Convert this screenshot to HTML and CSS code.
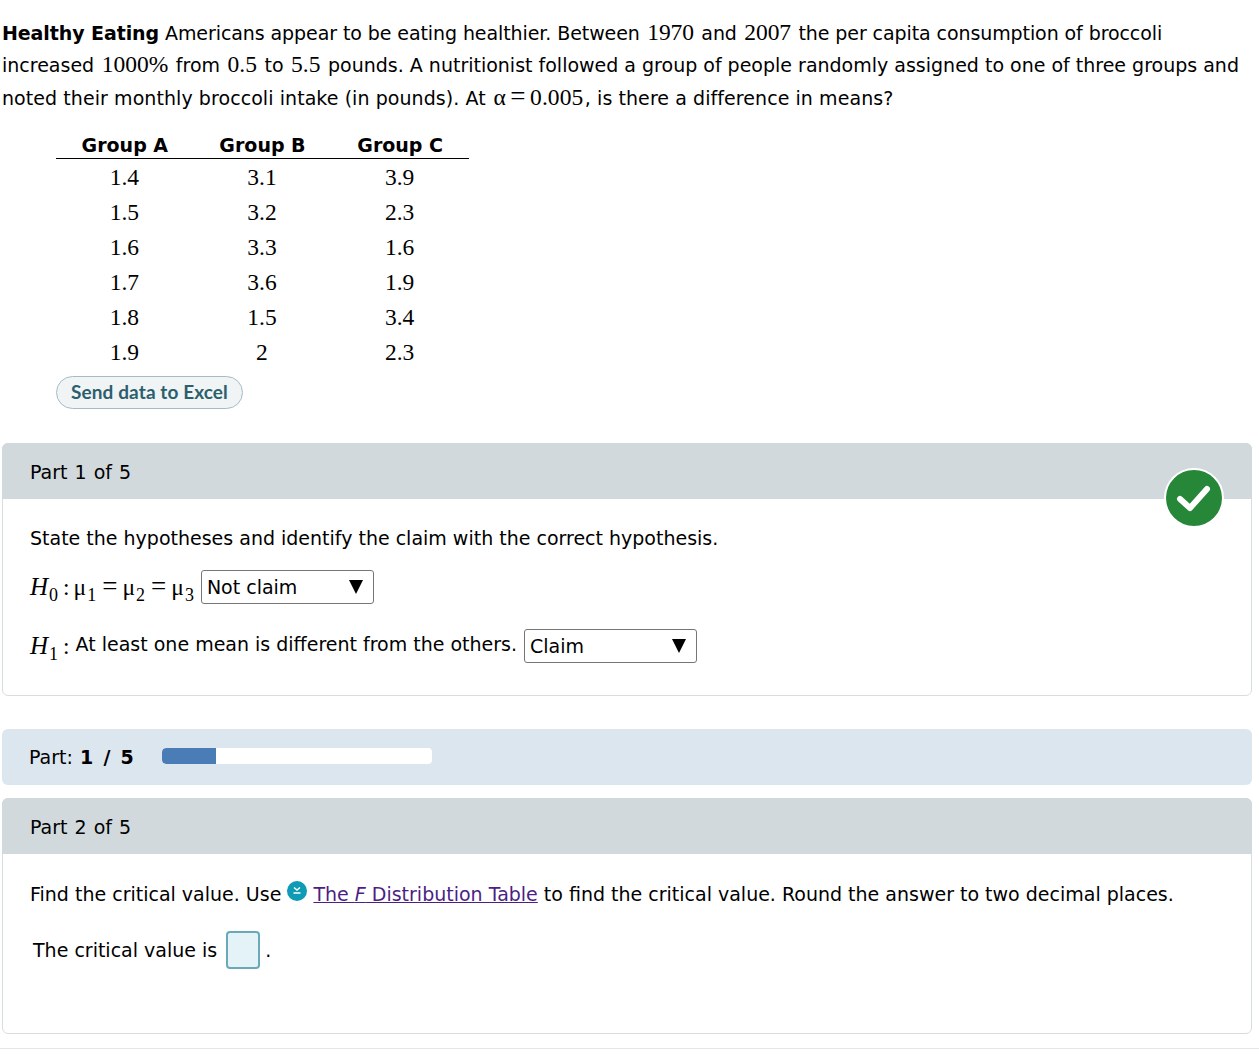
FILE: index.html
```html
<!DOCTYPE html>
<html lang="en">
<head>
    <meta charset="UTF-8">
    <title>Healthy Eating</title>
    <link rel="stylesheet" href="styles.css">
</head>
<body>
    <p class="intro">
        <span class="tight"><b>Healthy Eating</b> Americans appear to be eating healthier. Between <span class="num">1970</span> and <span class="num">2007</span> the per capita consumption of broccoli</span> increased <span class="num">1000%</span> from <span class="num">0.5</span> to <span class="num">5.5</span> pounds. A nutritionist followed a group of people randomly assigned to one of three groups and <span class="loose">noted their monthly broccoli intake (in pounds). At <span class="num">α<span class="eq">=</span>0.005</span>, is there a difference in means?</span>
    </p>

    <table class="data">
        <thead>
            <tr><th>Group A</th><th>Group B</th><th>Group C</th></tr>
        </thead>
        <tbody>
            <tr><td>1.4</td><td>3.1</td><td>3.9</td></tr>
            <tr><td>1.5</td><td>3.2</td><td>2.3</td></tr>
            <tr><td>1.6</td><td>3.3</td><td>1.6</td></tr>
            <tr><td>1.7</td><td>3.6</td><td>1.9</td></tr>
            <tr><td>1.8</td><td>1.5</td><td>3.4</td></tr>
            <tr><td>1.9</td><td>2</td><td>2.3</td></tr>
        </tbody>
    </table>

    <button class="excel">Send data to Excel</button>

    <section class="card card-one">
        <div class="card-head">Part 1 of 5</div>
        <svg class="check" width="60" height="60" viewBox="0 0 60 60">
            <circle cx="30" cy="30" r="29" fill="#258737" stroke="#fff" stroke-width="2"/>
            <path d="M16 31 L26 40 L43 21" fill="none" stroke="#fff" stroke-width="6" stroke-linecap="round" stroke-linejoin="round"/>
        </svg>
        <div class="card-body">
            <p class="task">State the hypotheses and identify the claim with the correct hypothesis.</p>
            <div class="hyp hyp-zero">
                <span class="num"><i class="var">H</i><sub>0</sub><span class="colon">:</span>μ<sub>1</sub><span class="eq">=</span>μ<sub>2</sub><span class="eq">=</span>μ<sub>3</sub></span>
                <span class="pick">Not claim<span class="arrow"></span></span>
            </div>
            <div class="hyp">
                <span class="num"><i class="var">H</i><sub>1</sub><span class="colon colon-end">:</span></span>
                <span class="hyp-text">At least one mean is different from the others.</span>
                <span class="pick">Claim<span class="arrow"></span></span>
            </div>
        </div>
    </section>

    <div class="progress">
        <span>Part: <b>1 / 5</b></span>
        <div class="track"><div class="fill"></div></div>
    </div>

    <section class="card card-two">
        <div class="card-head">Part 2 of 5</div>
        <div class="card-body">
            <p class="task">
                Find the critical value. Use
                <svg class="dl" width="20" height="20" viewBox="0 0 20 20">
                    <circle cx="10" cy="10" r="10" fill="#0f9ab5"/>
                    <path d="M7 6.5 L10 9 L13 6.5 M6.5 12 H13.5" fill="none" stroke="#fff" stroke-width="1.4"/>
                </svg>
                <a href="#">The <i>F</i> Distribution Table</a> to find the critical value. Round the answer to two decimal places.
            </p>
            <div class="answer">The critical value is<span class="box"></span>.</div>
        </div>
    </section>

    <div class="rule"></div>
</body>
</html>
```

FILE: styles.css
```css
* {
    box-sizing: border-box;
}

body {
    margin: 0;
    padding: 16.5px 7px 0 2px;
    font-family: 'DejaVu Sans', sans-serif;
    font-size: 19px;
    color: #000;
    background: #fff;
}

.num {
    font-family: 'Liberation Serif', serif;
    font-size: 23.5px;
    line-height: 1;
}

.eq {
    font-size: 27px;
    line-height: 0;
    margin: 0 5px;
}

.var {
    font-size: 25px;
}

.colon {
    margin: 0 4px;
}

.colon-end {
    margin-right: 0;
}

sub {
    font-size: 18px;
    line-height: 0;
    vertical-align: -6px;
    margin: 0 1px;
}

/* Intro text */
.intro {
    margin: 0;
    line-height: 32.5px;
}

.intro .num {
    margin: 0 1.5px;
}

.intro .eq {
    margin: 0 4.5px;
}

.tight {
    letter-spacing: -0.085px;
}

.loose {
    letter-spacing: 0.07px;
}

/* Data table */
.data {
    margin: 18.5px 0 0 54px;
    border-collapse: collapse;
    width: 413px;
    table-layout: fixed;
}

.data th {
    font-size: 19px;
    height: 26px;
    padding: 0;
    border-bottom: 1px solid #000;
}

.data td {
    font-family: 'Liberation Serif', serif;
    font-size: 23.5px;
    height: 35px;
    padding: 2px 1px 0 0;
    text-align: center;
}

.excel {
    display: block;
    margin: 7px 0 0 54px;
    width: 187px;
    height: 33px;
    padding: 0 0 2px;
    background: #f0f4f5;
    border: 1px solid #a5bcc6;
    border-radius: 17px;
    color: #2c5f6e;
    font-family: Lato, sans-serif;
    font-weight: bold;
    font-size: 19px;
    letter-spacing: 0.1px;
}

/* Part cards */
.card {
    position: relative;
    border: 1px solid #d6dee0;
    border-radius: 6px;
}

.card-one {
    margin-top: 34px;
    height: 253px;
}

.card-two {
    margin-top: 13px;
    height: 236px;
}

.card-head {
    height: 56px;
    margin: -1px -1px 0;
    padding: 2px 28px 0;
    display: flex;
    align-items: center;
    background: #d1d9dc;
    border-radius: 6px 6px 0 0;
    word-spacing: 1px;
}

.check {
    position: absolute;
    top: 24px;
    right: 27px;
}

.card-body {
    padding: 0 27px;
}

.task {
    margin: 0;
    line-height: 30px;
}

.card-one .task {
    padding-top: 24px;
}

.card-two .task {
    padding-top: 25px;
}

.hyp {
    display: flex;
    align-items: center;
    gap: 6px;
}

.hyp-zero {
    margin-top: 17px;
    margin-bottom: 25px;
}

.hyp-text {
    margin: 0 1px 4px 0;
}

.pick {
    display: flex;
    align-items: center;
    justify-content: space-between;
    width: 173px;
    height: 34px;
    padding: 0 10px 0 5px;
    border: 1px solid #767676;
    border-radius: 3px;
}

.arrow {
    width: 0;
    height: 0;
    border-left: 7px solid transparent;
    border-right: 7px solid transparent;
    border-top: 14px solid #000;
}

/* Progress strip */
.progress {
    display: flex;
    align-items: center;
    gap: 28px;
    height: 56px;
    margin-top: 33px;
    padding-left: 27px;
    background: #dbe6ef;
    border-radius: 6px;
    word-spacing: 1px;
}

.progress b {
    word-spacing: 3px;
    letter-spacing: 0.3px;
}

.track {
    width: 270px;
    height: 16px;
    margin-bottom: 2px;
    background: #fff;
    border-radius: 4px;
    overflow: hidden;
}

.fill {
    width: 20%;
    height: 100%;
    background: #4a7db5;
    border-radius: 4px 0 0 4px;
}

.dl {
    vertical-align: 0;
}

a {
    color: #4b1f84;
}

.answer {
    margin: 22px 0 0 3px;
    display: flex;
    align-items: center;
}

.box {
    width: 34px;
    height: 38px;
    margin: 0 5px 0 9px;
    background: #e4f3f8;
    border: 2px solid #6aa9b8;
    border-radius: 4px;
}

.rule {
    margin: 14px -7px 0 -2px;
    border-top: 1px solid #e2e8e8;
}
```
